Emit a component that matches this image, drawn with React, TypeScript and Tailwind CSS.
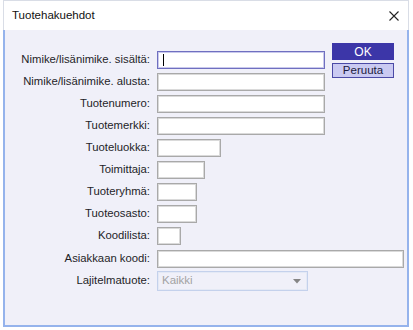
import React from "react";

const inputBase =
  "h-[18px] bg-white border border-[#a9a9a9] shadow-[inset_0_0_0_1px_#dadada]";

function Row({ label, w, focus }: { label: string; w: string; focus?: boolean }) {
  return (
    <>
      <div className="h-[18px] flex items-center justify-end text-[11.3px] text-[#1e1e28] leading-none whitespace-nowrap">
        {label}
      </div>
      <div className="h-[18px] flex items-center">
        {focus ? (
          <div className={`h-[18px] ${w} bg-white border border-[#6f6fc0] shadow-[inset_0_0_0_1px_#c9c9ec] flex items-center pl-[5px]`}>
            <span className="block w-px h-[12px] bg-black" />
          </div>
        ) : (
          <div className={`${inputBase} ${w}`} />
        )}
      </div>
    </>
  );
}

export default function App() {
  return (
    <div
      className="w-[413px] h-[330px] bg-white pl-[3px] pr-[4px]"
      style={{ fontFamily: '"Liberation Sans", Arial, sans-serif' }}
    >
      <div className="flex flex-col h-[327px]">
        <div className="h-[30px] flex items-center justify-between border-x border-t border-[#d9dde6] pl-[8px] pr-[9px]">
          <span className="text-[11.5px] text-[#111] leading-none">Tuotehakuehdot</span>
          <svg width="10" height="10" viewBox="0 0 10 10" className="block">
            <path d="M0.5 0.5 L9.5 9.5 M9.5 0.5 L0.5 9.5" stroke="#222" strokeWidth="1.1" fill="none" />
          </svg>
        </div>
        <div className="flex-1 bg-[#f0f0f9] border-x-2 border-b-2 border-[#95b3ec] pt-[13px]">
          <div className="flex">
            <div className="w-[327px] pt-[8px] grid grid-cols-[145px_auto] gap-x-[7px] gap-y-[4px]">
              <Row label="Nimike/lisänimike. sisältä:" w="w-[168px]" focus />
              <Row label="Nimike/lisänimike. alusta:" w="w-[168px]" />
              <Row label="Tuotenumero:" w="w-[168px]" />
              <Row label="Tuotemerkki:" w="w-[168px]" />
              <Row label="Tuoteluokka:" w="w-[64px]" />
              <Row label="Toimittaja:" w="w-[48px]" />
              <Row label="Tuoteryhmä:" w="w-[40px]" />
              <Row label="Tuoteosasto:" w="w-[40px]" />
              <Row label="Koodilista:" w="w-[24px]" />
            </div>
            <div className="flex flex-col gap-[3px]">
              <button className="w-[62px] h-[17px] bg-[#3c36a8] text-white text-[12px] leading-none flex items-center justify-center">
                OK
              </button>
              <button className="w-[62px] h-[15px] bg-[#cacaf2] border border-[#4b4aa6] text-[#1c1c40] text-[11.5px] leading-none flex items-center justify-center">
                Peruuta
              </button>
            </div>
          </div>
          <div className="mt-[5px] grid grid-cols-[145px_auto] gap-x-[7px] gap-y-[3px]">
            <Row label="Asiakkaan koodi:" w="w-[247px]" />
            <div className="h-[20px] flex items-center justify-end text-[11.3px] text-[#1e1e28] leading-none">
              Lajitelmatuote:
            </div>
            <div className="h-[20px] w-[151px] border border-[#c4d1ec] shadow-[inset_0_0_0_1px_#e4e9f5] bg-[#f0f0f9] flex items-center justify-between pl-[4px] pr-[6px]">
              <span className="text-[11.5px] text-[#a3a3a3] leading-none">Kaikki</span>
              <svg width="8" height="5" viewBox="0 0 8 5" className="block">
                <path d="M0 0 L8 0 L4 4.5 Z" fill="#858585" />
              </svg>
            </div>
          </div>
        </div>
      </div>
    </div>
  );
}
